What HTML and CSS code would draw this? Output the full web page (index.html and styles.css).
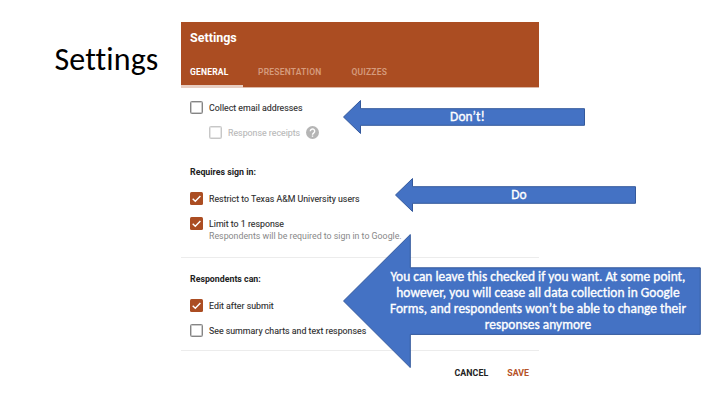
FILE: index.html
```html
<!DOCTYPE html>
<html lang="en">
<head>
<meta charset="utf-8">
<title>Settings</title>
<link rel="stylesheet" href="styles.css">
</head>
<body>
<main class="slide">
  <h1 class="slide-title">Settings</h1>
  <section class="dialog">
    <header class="dialog-header">
      <h2 class="dialog-title">Settings</h2>
      <nav class="tabs">
        <span class="tab general active">GENERAL</span>
        <span class="tab presentation">PRESENTATION</span>
        <span class="tab quizzes">QUIZZES</span>
      </nav>
    </header>
    <div class="group email">
      <div class="row"><span class="box"></span><span>Collect email addresses</span></div>
      <div class="row nested"><span class="box"></span><span>Response receipts</span>
        <svg class="help" viewBox="0 0 24 24"><circle cx="12" cy="12" r="12" fill="#b5b5b5"/><path d="M8 9.5a4 4 0 1 1 6.5 3.1c-1.5 1.1-2.5 1.8-2.5 3.4M12 17.5v2.5" fill="none" stroke="#fff" stroke-width="2.6"/></svg>
      </div>
    </div>
    <div class="group signin">
      <h3>Requires sign in:</h3>
      <div class="row"><span class="box checked"><svg viewBox="0 0 13 13"><path d="M2.7 6.7l2.6 2.6 5.1-5.2"/></svg></span><span>Restrict to Texas A&amp;M University users</span></div>
      <div class="row"><span class="box checked"><svg viewBox="0 0 13 13"><path d="M2.7 6.7l2.6 2.6 5.1-5.2"/></svg></span><span>Limit to 1 response</span></div>
      <p class="hint">Respondents will be required to sign in to Google.</p>
    </div>
    <div class="group respondents">
      <h3>Respondents can:</h3>
      <div class="row"><span class="box checked"><svg viewBox="0 0 13 13"><path d="M2.7 6.7l2.6 2.6 5.1-5.2"/></svg></span><span>Edit after submit</span></div>
      <div class="row"><span class="box"></span><span>See summary charts and text responses</span></div>
    </div>
    <footer class="actions"><span class="cancel">CANCEL</span><span class="save">SAVE</span></footer>
  </section>

  <div class="callout dont">
    <svg viewBox="0 0 242 34"><path d="M.5 17L17.5.5v8.2h224v16.6h-224v8.2z"/></svg>
    <p><span>Don’t!</span></p>
  </div>
  <div class="callout do">
    <svg viewBox="0 0 241 34"><path d="M.5 17L17.5.5v8.2h223v16.6h-223v8.2z"/></svg>
    <p><span>Do</span></p>
  </div>
  <div class="callout leave">
    <svg viewBox="0 0 358 134"><path d="M.5 67L67.3.5v33.3h290v66.6h-290v33.2z"/></svg>
    <p><span>You can leave this checked if you want. At some point,</span><span>however, you will cease all data collection in Google</span><span>Forms, and respondents won’t be able to change their</span><span>responses anymore</span></p>
  </div>
</main>
</body>
</html>
```

FILE: styles.css
```css
* { box-sizing: border-box; }
body { margin: 0; background: #fff; }
h1, h2, h3, p { margin: 0; }
.slide {
  position: relative;
  display: flex;
  width: 720px;
  height: 405px;
  overflow: hidden;
}
.slide-title {
  flex: none;
  width: 181px;
  padding: 41px 0 0 54.5px;
  font: 400 32px/38px Carlito, "Open Sans", sans-serif;
  letter-spacing: .1px;
  font-variant-ligatures: none;
  white-space: nowrap;
  color: #000;
}
.dialog {
  width: 358px;
  margin-top: 22px;
  font: 400 8.8px/12px Roboto, sans-serif;
  color: #2b2b2b;
  white-space: nowrap;
}
.dialog-header {
  display: flex;
  flex-direction: column;
  justify-content: space-between;
  height: 66px;
  padding: 7.5px 9px 0;
  background: #ab4d22;
  border-bottom: 1px solid #ddb8a6;
}
.dialog-title { font-size: 12.5px; line-height: 16px; font-weight: 700; color: #fff; }
.tabs { display: flex; height: 23px; margin: 0 -9px -1px; font-size: 8.5px; font-weight: 600; letter-spacing: .2px; }
.tab { line-height: 14px; color: #d59b7d; }
.tab.general { width: 62px; padding-left: 9px; color: #fff; font-weight: 700; border-bottom: 3px solid #e8cec2; }
.presentation { width: 93.5px; margin-left: 15px; }
.group { padding: 0 9px; }
.email { height: 73px; padding-top: 13px; }
.row { display: flex; align-items: center; height: 13px; gap: 6px; }
.row > span:last-of-type { -webkit-text-stroke: .1px currentColor; }
.box { flex: none; width: 13px; height: 13px; border: 1.5px solid #858585; border-radius: 1.5px; box-shadow: inset 0 0 0 .5px #999; }
.box.checked { border: 0; background: #ab4d22; box-shadow: none; }
.box svg { display: block; width: 13px; height: 13px; }
.box path { fill: none; stroke: #fff; stroke-width: 1.4; }
.row.nested { margin: 12px 0 0 19px; color: #b8b8b8; }
.row.nested .box { border-color: #c7c7c7; box-shadow: inset 0 0 0 .5px #ccc; }
.help { width: 13px; height: 13px; }
h3 { font-size: 8.8px; line-height: 12px; font-weight: 700; color: #222; }
h3 + .row { margin-top: 14px; }
.row + .row:not(.nested) { margin-top: 12px; }
.signin { height: 97px; padding-top: 5px; border-bottom: 1px solid #ececec; }
.hint { padding-left: 19px; color: #888; }
.respondents { height: 93px; padding-top: 15px; border-bottom: 1px solid #ececec; }
.actions { display: flex; justify-content: flex-end; gap: 19px; padding: 16px 10px 0; font-size: 8.8px; font-weight: 700; color: #222; }
.cancel { letter-spacing: .1px; }
.save { color: #b55228; }
.callout { position: absolute; }
.callout svg { display: block; width: 100%; height: 100%; }
.callout path { fill: #4472c4; stroke: #34599c; stroke-width: 1; }
.callout p {
  position: absolute;
  inset: 0;
  display: flex;
  flex-direction: column;
  align-items: center;
  justify-content: center;
  font: 400 13.4px/16px Carlito, Lato, sans-serif;
  letter-spacing: .04px;
  font-variant-ligatures: none;
  -webkit-text-stroke: .35px #fff;
  color: #fff;
  white-space: nowrap;
}
.dont { left: 343px; top: 100px; width: 242px; height: 34px; }
.do { left: 395px; top: 178px; width: 241px; height: 34px; }
.callout.dont p, .callout.do p { padding-left: 7px; }
.leave { left: 343px; top: 234px; width: 358px; height: 134px; }
.callout.leave p { padding-left: 32px; }
```
